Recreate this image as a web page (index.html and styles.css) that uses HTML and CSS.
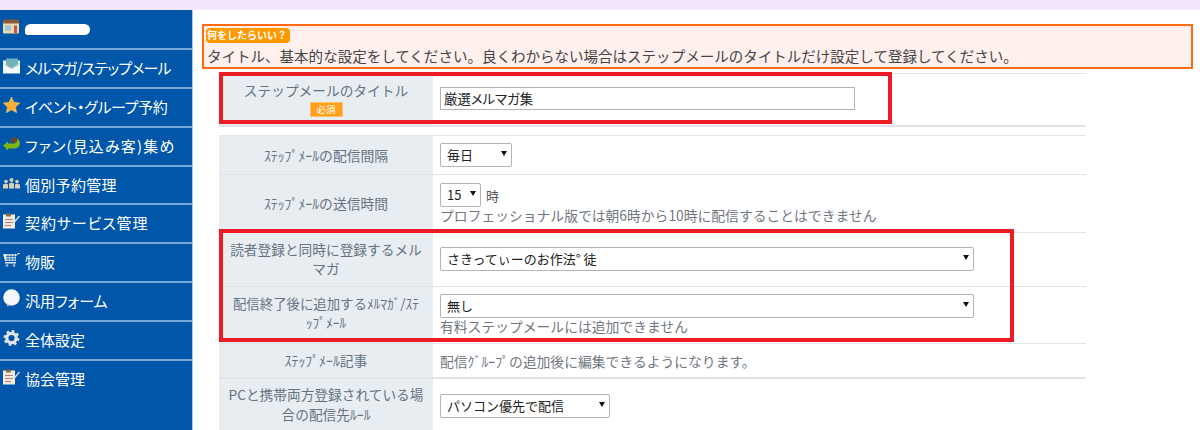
FILE: index.html
```html
<!DOCTYPE html>
<html lang="ja">
<head>
<meta charset="utf-8">
<title>ステップメール設定</title>
<link rel="stylesheet" href="styles.css">
</head>
<body>
<div class="topband"></div>
<div class="page">
  <nav class="side">
    <a class="item">
      <svg class="ico" viewBox="0 0 17 15"><rect x="0" y="1" width="16" height="13" rx="1" fill="#e8d9b0"/><rect x="0" y="0" width="16" height="4" rx="1" fill="#8a5a3c"/><rect x="2" y="6" width="6" height="5" fill="#9fc4d8"/><rect x="11" y="6" width="3" height="8" fill="#c4544c"/></svg>
      <span class="blob"></span>
    </a>
    <a class="item">
      <svg class="ico" viewBox="0 0 17 15"><rect x="0" y="2" width="17" height="13" fill="#f4f7f8"/><path d="M3 0h12v7l-6 3-6-3z" fill="#6fb3b8"/><path d="M0 4l8.500 6L17 4v1L8.500 11 0 5z" fill="#c9d6da"/></svg>
      <span class="tight">メルマガ/ステップメール</span>
    </a>
    <a class="item">
      <svg class="ico" viewBox="0 0 17 16"><path d="M8.500 0l2.500 5.300 5.800.7-4.300 4 1.200 5.800-5.200-3-5.200 3L4.500 10 .2 6 6 5.300z" fill="#fbb030" stroke="#e8d8a0" stroke-width=".5"/></svg>
      <span class="tighter">イベント・グループ予約</span>
    </a>
    <a class="item">
      <svg class="ico" viewBox="0 0 17 13"><path d="M0 8l5-4v2h7V1c3 0 5 2 5 5s-3 5-5 5H5v2z" fill="#7cb518"/><rect x="8" y="0" width="6" height="5" rx="1.500" fill="#6b4423"/></svg>
      <span class="wider">ファン(見込み客)集め</span>
    </a>
    <a class="item">
      <svg class="ico" viewBox="0 0 17 11"><g fill="#d9cfb8"><circle cx="3" cy="4" r="1.800"/><circle cx="8.500" cy="2.500" r="2"/><circle cx="14" cy="4" r="1.800"/><path d="M0 11V7l3-1 2 1v4zM6 11V6l2.500-1L11 6v5zM12 11V7l2-1 3 1v4z"/></g></svg>
      <span class="kanji">個別予約管理</span>
    </a>
    <a class="item">
      <svg class="ico" viewBox="0 0 17 15"><rect x="0" y="1" width="12" height="14" fill="#f1ece0"/><rect x="3" y="0" width="5" height="3" fill="#8a6a4a"/><path d="M2 6h8M2 9h8M2 12h6" stroke="#c77" stroke-width="1"/><path d="M10 9l6-7 1 1-6 7z" fill="#d5dde0"/></svg>
      <span class="wide">契約サービス管理</span>
    </a>
    <a class="item">
      <svg class="ico" viewBox="0 0 17 14"><path d="M0 1h13v7H2z" fill="#dfe7ea"/><path d="M3 3.500h10M3 6h10M5 1v7M8 1v7M11 1v7" stroke="#0056a8" stroke-width=".7"/><path d="M13 2l2-2h2v1h-1.500L13 3z" fill="#dfe7ea"/><rect x="2" y="9" width="11" height="1.500" fill="#dfe7ea"/><circle cx="4" cy="12.500" r="1.400" fill="#9aa8b0"/><circle cx="11" cy="12.500" r="1.400" fill="#9aa8b0"/></svg>
      <span>物販</span>
    </a>
    <a class="item">
      <svg class="ico bubble" viewBox="0 0 17 18"><circle cx="8.500" cy="8.500" r="8.300" fill="#f5f7f8"/><path d="M3 14l3 1-1 3z" fill="#cfd6da"/></svg>
      <span>汎用フォーム</span>
    </a>
    <a class="item">
      <svg class="ico" viewBox="0 0 17 17"><circle cx="8.500" cy="8.500" r="5" fill="none" stroke="#dfe5e8" stroke-width="3.400"/><circle cx="8.500" cy="8.500" r="7" fill="none" stroke="#dfe5e8" stroke-width="3" stroke-dasharray="2.800 2.700"/></svg>
      <span>全体設定</span>
    </a>
    <a class="item">
      <svg class="ico" viewBox="0 0 17 15"><rect x="0" y="1" width="12" height="14" fill="#f1ece0"/><rect x="3" y="0" width="5" height="3" fill="#8a6a4a"/><path d="M2 6h8M2 9h8M2 12h6" stroke="#c77" stroke-width="1"/><path d="M10 9l6-7 1 1-6 7z" fill="#d5dde0"/></svg>
      <span>協会管理</span>
    </a>
  </nav>
  <main class="main">
    <section class="notice">
      <span class="badge">何をしたらいい？</span>
      <p class="notice-text">タイトル、基本的な設定をしてください。良くわからない場合はステップメールのタイトルだけ設定して登録してください。</p>
    </section>
    <div class="form">
      <div class="group group-first">
        <div class="row r-title">
          <div class="label">
            <span>ステップメールのタイトル</span>
            <span class="req">必須</span>
          </div>
          <div class="value"><input class="text" type="text" value="厳選メルマガ集"></div>
        </div>
      </div>
      <div class="group">
        <div class="row r-interval">
          <div class="label small">ｽﾃｯﾌﾟﾒｰﾙの配信間隔</div>
          <div class="value"><span class="sel w72"><select><option>毎日</option></select></span></div>
        </div>
        <div class="row r-time">
          <div class="label small">ｽﾃｯﾌﾟﾒｰﾙの送信時間</div>
          <div class="value">
            <div class="line"><span class="sel w41 tall"><select><option>15</option></select></span><span class="unit">時</span></div>
            <p class="note">プロフェッショナル版では朝6時から10時に配信することはできません</p>
          </div>
        </div>
        <div class="row r-reader">
          <div class="label">読者登録と同時に登録するメルマガ</div>
          <div class="value"><span class="sel w533"><select><option>さきってぃーのお作法°&nbsp;徒</option></select></span></div>
        </div>
        <div class="row r-after">
          <div class="label">配信終了後に追加するﾒﾙﾏｶﾞ/ｽﾃ<br><span class="hw">ｯﾌﾟﾒｰﾙ</span></div>
          <div class="value">
            <span class="sel w533"><select><option>無し</option></select></span>
            <p class="note">有料ステップメールには追加できません</p>
          </div>
        </div>
        <div class="row r-article">
          <div class="label small">ｽﾃｯﾌﾟﾒｰﾙ記事</div>
          <div class="value"><p class="note">配信ｸﾞﾙｰﾌﾟの追加後に編集できるようになります。</p></div>
        </div>
        <div class="row r-pc">
          <div class="label">PCと携帯両方登録されている場合の配信先ﾙｰﾙ</div>
          <div class="value"><span class="sel w169"><select><option>パソコン優先で配信</option></select></span></div>
        </div>
      </div>
      <div class="redbox red-a"></div>
      <div class="redbox red-b"></div>
    </div>
  </main>
</div>
</body>
</html>
```
FILE: styles.css
```css
* { box-sizing: border-box; }
html, body { margin: 0; height: 430px; overflow: hidden; background: #fff; }
body { font-family: "Noto Sans CJK JP", "Liberation Sans", sans-serif; color: #333; }
.topband { height: 10px; background: #f3e7fd; }
.page { display: flex; height: 420px; }

.side { width: 193px; flex: none; padding-top: 1px; background: #0056a8; border-right: 1px solid #a9c6e8; color: #fff; }
.item { display: flex; align-items: flex-start; gap: 5px; height: 38.900px; padding: 8px 0 0 3px; border-bottom: 2px solid #7ba6dc; font-size: 15px; line-height: 22px; font-feature-settings: "palt"; white-space: nowrap; }
.item:last-child { border-bottom: 0; }
.item span { margin-top: -1px; }
.item .tight { letter-spacing: -.8px; }
.item .tighter { letter-spacing: -.35px; }
.item .wide { letter-spacing: .9px; }
.item .wider { letter-spacing: 1.150px; }
.item .kanji { letter-spacing: .3px; }
.ico { width: 17px; height: 16px; flex: none; }
.ico.bubble { height: 18px; margin-top: -2px; }
.item .blob { display: block; width: 65px; height: 11px; margin-top: 5px; background: #fff; border-radius: 6px 6px 6px 3px; }

.main { flex: 1; min-width: 0; padding: 14px 7px 0 9px; }
.notice { height: 45px; border: 2px solid #ff6a13; background: #fff0ee; padding: 2px 0 0 2px; }
.badge { display: block; width: 84px; height: 15px; background: #ff9900; border-radius: 4px; color: #fff; font-size: 10px; line-height: 14px; font-weight: 700; padding-left: 1px; white-space: nowrap; }
.notice-text { margin: 2px 0 0 1px; font-size: 14.520px; line-height: 21px; white-space: nowrap; color: #444; }

.form { position: relative; margin: 4px 0 0 17px; width: 867px; }
.group { border-top: 1px solid #e1e4ee; }
.group-first { margin-bottom: 8px; }
.row { display: grid; grid-template-columns: 214px 1fr; border-bottom: 1px solid #dfe3ea; }
.r-title { height: 53px; border-bottom-width: 2px; }
.r-interval { height: 39px; }
.r-time { height: 58px; }
.r-reader { height: 54px; }
.r-after { height: 57px; }
.r-article { height: 35px; border-bottom-width: 2px; }
.r-pc { height: 52px; border-bottom: 0; }

.label { display: flex; flex-direction: column; align-items: center; justify-content: center; background: #e8edf2; color: #66737f; font-size: 13.700px; line-height: 22px; padding: 0 10px; text-align: center; }
.r-title .label { justify-content: flex-start; padding-top: 5px; }
.r-reader .label { display: block; line-height: 19px; padding-top: 7px; }
.r-pc .label { display: block; padding: 5px 5px 0; line-height: 20px; }
.label.small { font-size: 13.800px; padding-bottom: 1px; }
.r-after .label { display: block; padding-top: 7px; font-size: 13.400px; line-height: 19px; }
.req { display: block; width: 33px; height: 15px; margin-top: 1px; background: #ff9f1c; border: 1px solid #ffc266; color: #fff; font-size: 9.500px; line-height: 12px; text-align: center; }

.value { padding-left: 7px; font-size: 13px; color: #555; display: flex; flex-direction: column; justify-content: center; align-items: flex-start; }
.text { width: 415px; height: 23px; border: 1px solid #b4b4b4; padding: 0 3px; font: 13.400px/21px "Noto Sans CJK JP", sans-serif; font-feature-settings: "palt"; color: #222; background: #fff; border-radius: 0; outline: 0; }
.r-title .value { padding-bottom: 3px; }

.sel { position: relative; display: block; height: 24px; }
.sel::after { content: ""; position: absolute; right: 5px; top: 8px; border: 3.500px solid transparent; border-top: 5px solid #111; border-bottom: 0; pointer-events: none; }
.sel select { appearance: none; -webkit-appearance: none; display: block; width: 100%; height: 100%; border: 1px solid #b4b4b4; border-radius: 2px; background: #fff; padding: 0 4px 0 6px; font: 13px/22px "Noto Sans CJK JP", sans-serif; color: #222; outline: 0; }
.w72 { width: 72px; }
.w41 { width: 41px; }
.w533 { width: 534px; }
.w169 { width: 170px; }
.line { display: flex; align-items: center; gap: 5px; }
.unit { font-size: 13px; }
.note { margin: 0; font-size: 13.800px; line-height: 16px; white-space: nowrap; color: #70777f; }
.r-time .value { justify-content: flex-start; padding-top: 8px; }
.r-after .value { justify-content: flex-start; padding-top: 7px; }
.r-reader .value { padding-bottom: 2px; }
.r-pc .value { padding-top: 2px; }

.redbox { position: absolute; border: 4px solid #ed1c24; pointer-events: none; }
.red-a { left: 0; top: -1px; width: 673px; height: 52px; }
.red-b { left: 0; top: 156px; width: 795px; height: 113px; }
```
